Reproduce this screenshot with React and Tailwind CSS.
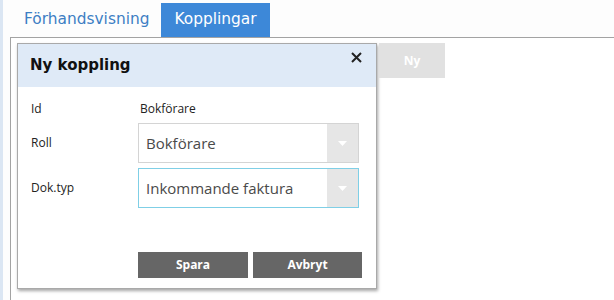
import React from 'react';

const Select = ({ value, focused }) => (
  <div
    className={`flex h-[40px] w-[221px] border ${focused ? 'border-[#7fcfe6]' : 'border-[#d4d4d4]'} bg-white`}
  >
    <div className="flex-1 flex items-center pl-[7px] text-[15px] text-[#4a4a4a]">{value}</div>
    <div className="w-[31px] bg-[#e6e6e6] flex items-center justify-center">
      <svg width="9" height="5" viewBox="0 0 9 5">
        <path d="M0 0 L9 0 L4.5 5 Z" fill="#ffffff" />
      </svg>
    </div>
  </div>
);

const App = () => {
  return (
    <div
      className="w-[614px] h-[300px] flex bg-[#fdfdfd] overflow-hidden"
      style={{ fontFamily: '"Open Sans", "Noto Sans", sans-serif' }}
    >
      {/* Left strip */}
      <div className="w-[3px] h-full bg-[#dbe6f3]" />

      <div className="flex-1 flex flex-col pl-[7px]">
        {/* Tabs */}
        <div
          className="flex items-end h-[37px] pt-[3px]"
          style={{ fontFamily: '"DejaVu Sans", Verdana, sans-serif' }}
        >
          <div className="h-[34px] flex items-center pl-[14px] pr-[12px] text-[15.4px] text-[#3d7fc4]">
            Förhandsvisning
          </div>
          <div className="h-[34px] flex items-center px-[13px] bg-[#3d88d8] text-[15.4px] text-white">
            Kopplingar
          </div>
        </div>

        {/* Panel */}
        <div className="flex-1 border-l border-t border-[#a3a3a3] pl-[6px] pt-[5px] flex items-start gap-[2px] bg-white">
          {/* Dialog */}
          <div className="w-[360px] h-[246px] border border-[#a9a9a9] bg-white shadow-[1px_2px_3px_rgba(0,0,0,0.35)] flex flex-col">
            <div className="h-[43px] bg-[#dfeaf7] flex items-center justify-between pl-[12px] pr-[14px]">
              <span
                className="text-[15px] font-bold text-[#111]"
                style={{ fontFamily: '"DejaVu Sans", Verdana, sans-serif' }}
              >
                Ny koppling
              </span>
              <svg width="11" height="11" viewBox="0 0 11 11" className="self-start mt-[8px]">
                <path d="M1 1 L10 10 M10 1 L1 10" stroke="#222" strokeWidth="2" />
              </svg>
            </div>

            <div className="flex-1 flex flex-col pl-[12px] pt-[14px] text-[12px] text-[#222]">
              <div className="flex items-center h-[16px]">
                <div className="w-[108px] pl-[1px]">Id</div>
                <div className="pl-[2px]">Bokförare</div>
              </div>
              <div className="flex items-center mt-[6px]">
                <div className="w-[108px] pl-[1px]">Roll</div>
                <Select value="Bokförare" />
              </div>
              <div className="flex items-center mt-[5px]">
                <div className="w-[108px] pl-[1px]">Dok.typ</div>
                <Select value="Inkommande faktura" focused />
              </div>
              <div className="flex gap-[5px] pl-[108px] mt-[44px]">
                <button className="w-[110px] h-[26px] bg-[#666666] text-white text-[12px] font-bold">
                  Spara
                </button>
                <button className="w-[109px] h-[26px] bg-[#666666] text-white text-[12px] font-bold">
                  Avbryt
                </button>
              </div>
            </div>
          </div>

          {/* Ny button */}
          <button className="w-[66px] h-[35px] bg-[#e1e1e1] text-white text-[12px] font-bold">
            Ny
          </button>
        </div>
      </div>
    </div>
  );
};

export default App;
